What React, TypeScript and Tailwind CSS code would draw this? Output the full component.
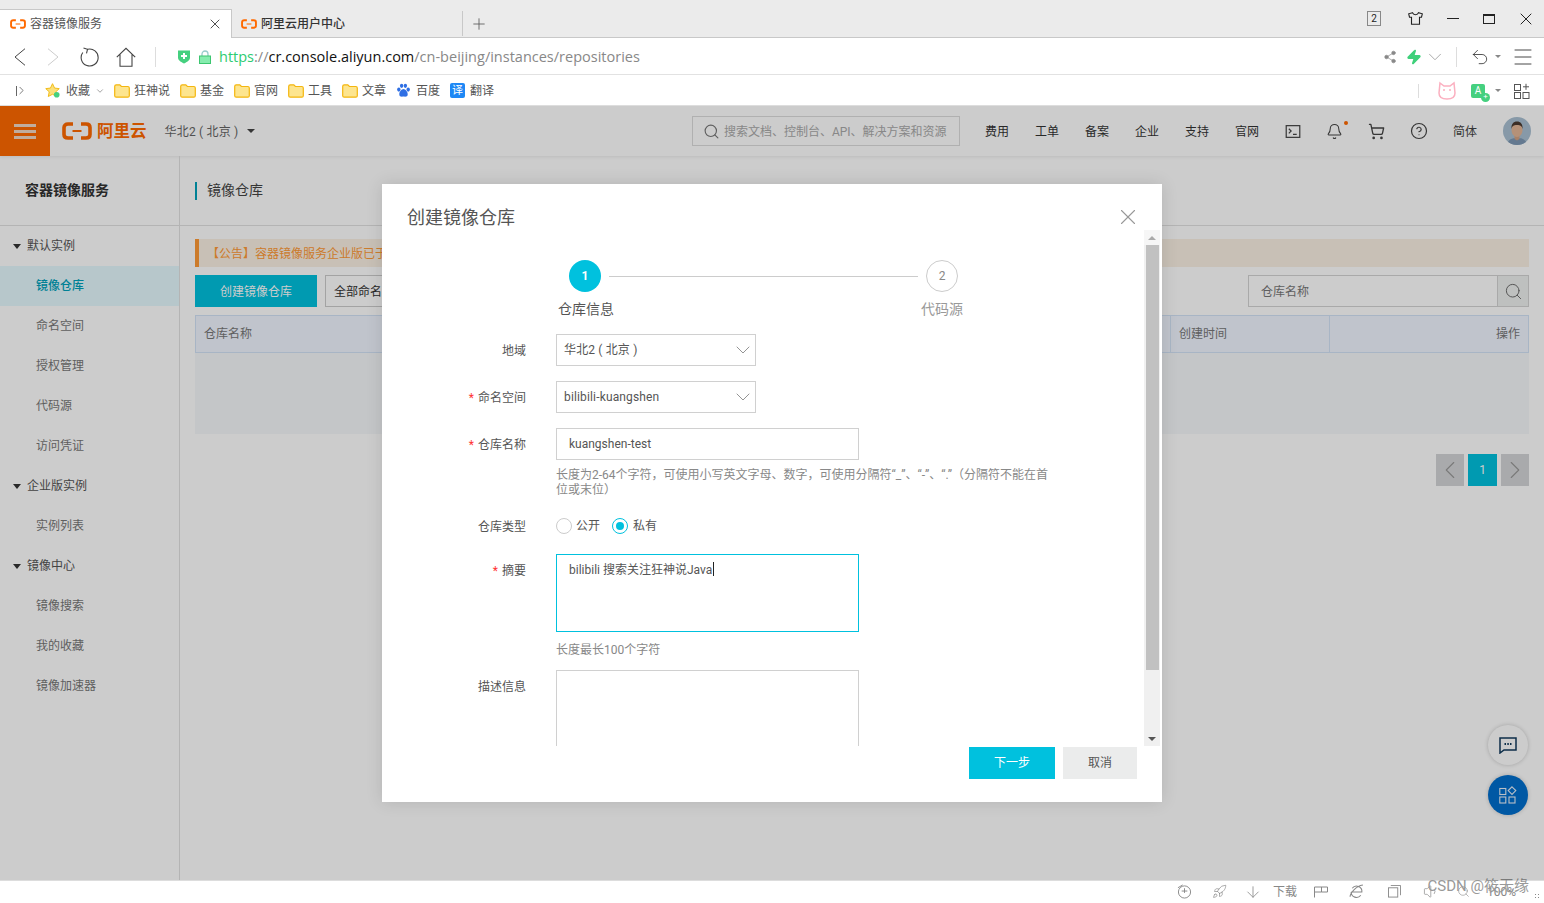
import { ReactNode } from "react";
import {
  ArrowDown, Bell, ChevronDown, ChevronLeft, ChevronRight, CircleHelp, Menu, Plus, Rocket, Search,
  Share2, ShoppingCart, Undo2, Volume1, X, Zap,
} from "lucide-react";

const cjk = "font-['Roboto','Noto_Sans_CJK_SC',sans-serif]";

const bookmarks = ["狂神说", "基金", "官网", "工具", "文章"];
const navItems = ["费用", "工单", "备案", "企业", "支持", "官网"];

const sideMenu = [
  { title: "默认实例", items: ["镜像仓库", "命名空间", "授权管理", "代码源", "访问凭证"] },
  { title: "企业版实例", items: ["实例列表"] },
  { title: "镜像中心", items: ["镜像搜索", "我的收藏", "镜像加速器"] },
];

function AliLogo({ className }: { className?: string }) {
  return (
    <svg viewBox="0 0 30 18" className={className} fill="none" stroke="currentColor">
      <path d="M11 2H6C3.500 2 2 3.500 2 5.500v7C2 14.500 3.500 16 6 16h5" strokeWidth="3.600" />
      <path d="M19 2h5c2.500 0 4 1.500 4 3.500v7c0 2-1.500 3.500-4 3.500h-5" strokeWidth="3.600" />
      <path d="M10.500 9h9" strokeWidth="2" />
    </svg>
  );
}

function Folder() {
  return (
    <svg viewBox="0 0 16 14" className="h-[14px] w-[16px]">
      <path d="M.7 2.500C.7 1.500 1.300.8 2.200.8h3.600l1.600 1.700h6.400c.9 0 1.500.6 1.500 1.500v7.700c0 .9-.6 1.500-1.500 1.500H2.200c-.9 0-1.500-.6-1.500-1.500z" fill="#fde58f" stroke="#f4b60f" strokeWidth="1.200" />
    </svg>
  );
}

function Select({ value }: { value: string }) {
  return (
    <div className="flex h-8 w-[200px] items-center justify-between border border-[#d0d0d0] pl-[7px] text-xs tracking-[0.15px] text-[#555]">
      {value}
      <ChevronDown className="h-6 w-6 text-[#888]" strokeWidth={0.9} />
    </div>
  );
}

function FormRow({ label, required, children, className }: { label: string; required?: boolean; children: ReactNode; className?: string }) {
  return (
    <div className={`flex ${className ?? ""}`}>
      <div className="h-8 w-[144px] shrink-0 text-right text-xs leading-[35px] text-[#555]">
        {required && <span className="mr-1 text-[#f33]">*</span>}
        {label}
      </div>
      <div className="ml-[30px]">{children}</div>
    </div>
  );
}

function Dialog() {
  return (
    <div className="absolute left-[382px] top-[78px] z-20 flex h-[618px] w-[780px] flex-col bg-white shadow-[0_0_16px_rgba(0,0,0,0.12)]">
      <div className="flex h-[46px] shrink-0 items-start justify-between pl-[25px] pr-[21px] pt-[22px]">
        <span className="text-[18px] leading-6 text-[#555]">创建镜像仓库</span>
        <X className="-mt-[2px] h-[26px] w-[26px] text-[#999]" strokeWidth={1} />
      </div>
      <div className="flex h-[516px] shrink-0">
        <div className="flex-1 overflow-hidden">
          <div className="ml-[187px] mt-[30px] flex items-center">
            <div className="flex h-8 w-8 items-center justify-center rounded-full bg-[#00c1de] text-xs font-bold text-white">1</div>
            <div className="mx-2 h-px w-[309px] bg-[#ccc]" />
            <div className="flex h-8 w-8 items-center justify-center rounded-full border border-[#ccc] text-xs text-[#888]">2</div>
          </div>
          <div className="ml-[176px] mt-[7px] flex text-sm leading-5">
            <span className="w-[56px] text-[#555]">仓库信息</span>
            <span className="ml-[307px] text-[#999]">代码源</span>
          </div>
          <FormRow label="地域" className="mt-[15px]"><Select value="华北2 ( 北京 )" /></FormRow>
          <FormRow label="命名空间" required className="mt-[15px]"><Select value="bilibili-kuangshen" /></FormRow>
          <FormRow label="仓库名称" required className="mt-[15px]">
            <div className="flex h-8 w-[303px] items-center border border-[#d0d0d0] pl-3 text-xs text-[#555]">kuangshen-test</div>
            <p className="mt-2 whitespace-nowrap text-xs leading-[15px] text-[#888] [text-spacing-trim:space-all]">
              长度为2-64个字符，可使用小写英文字母、数字，可使用分隔符“_”、“-”、“.”（分隔符不能在首
              <br />
              位或末位）
            </p>
          </FormRow>
          <div className="mt-[18px] flex h-5 items-center">
            <div className="w-[144px] pt-[2px] text-right text-xs text-[#555]">仓库类型</div>
            <div className="ml-[30px] flex items-center text-xs text-[#555]">
              <span className="h-4 w-4 rounded-full border border-[#ccc]" />
              <span className="ml-1">公开</span>
              <span className="ml-[12px] flex h-4 w-4 items-center justify-center rounded-full border border-[#00c1de]">
                <span className="h-2 w-2 rounded-full bg-[#00c1de]" />
              </span>
              <span className="ml-[5px]">私有</span>
            </div>
          </div>
          <FormRow label="摘要" required className="mt-[18px]">
            <div className="h-[78px] w-[303px] border border-[#00c1de] pl-3 pt-[5px] text-xs leading-[17px] text-[#555]">
              bilibili 搜索关注狂神说Java<span className="ml-px inline-block h-[14px] w-px translate-y-[2px] bg-[#222]" />
            </div>
            <p className="mt-[11px] text-xs leading-[15px] text-[#888]">长度最长100个字符</p>
          </FormRow>
          <FormRow label="描述信息" className="mt-[12px]">
            <div className="h-[100px] w-[303px] border border-[#d0d0d0]" />
          </FormRow>
        </div>
        <div className="mr-[2px] flex w-4 flex-col items-center bg-[#f0f0f0]">
          <div className="flex h-[15px] w-full items-center justify-center bg-[#f6f6f6]">
            <span className="h-0 w-0 border-x-[4px] border-b-[4px] border-x-transparent border-b-[#aaa]" />
          </div>
          <div className="h-[425px] w-[13px] bg-[#c1c1c1]" />
          <div className="mt-auto flex h-[15px] items-center justify-center">
            <span className="h-0 w-0 border-x-[4px] border-t-[4px] border-x-transparent border-t-[#555]" />
          </div>
        </div>
      </div>
      <div className="flex flex-1 items-start justify-end gap-2 pr-[25px] pt-px text-xs">
        <button className="h-8 w-[86px] bg-[#00c1de] text-white">下一步</button>
        <button className="h-8 w-[74px] bg-[#ebecec] text-[#555]">取消</button>
      </div>
    </div>
  );
}

function Avatar() {
  return (
    <svg viewBox="0 0 28 28" className="h-7 w-7 rounded-full">
      <rect width="28" height="28" fill="#a9c0d2" />
      <path d="M4 28c1-6 5-7 10-7s9 1 10 7z" fill="#7d98b4" />
      <path d="M11.500 18h5v4l-2.500 1.500-2.500-1.500z" fill="#d3a283" />
      <ellipse cx="14" cy="13" rx="5.500" ry="7" fill="#e3b697" />
      <path d="M8.500 12c-.5-5 2-7.500 5.500-7.500S20 7 19.500 12c-.5-3-2-4-5.500-4s-5 1-5.500 4z" fill="#4a3a30" />
    </svg>
  );
}

function Page() {
  return (
    <div className="relative flex min-h-0 flex-1 flex-col overflow-hidden bg-white">
      <header className="flex h-[50px] shrink-0 items-center shadow-[0_1px_3px_rgba(0,0,0,0.08)]">
        <div className="flex h-full w-[50px] items-center justify-center bg-[#ff6a00]">
          <div className="flex w-[22px] flex-col gap-[3px]">
            <span className="h-[3px] bg-[#f0d9c6]" />
            <span className="h-[3px] bg-[#f0d9c6]" />
            <span className="h-[3px] bg-[#f0d9c6]" />
          </div>
        </div>
        <AliLogo className="ml-3 h-[18px] w-[30px] text-[#ff6a00]" />
        <span className="ml-[5px] pt-[2px] text-[16.500px] font-bold text-[#ff6a00]">阿里云</span>
        <span className="ml-[18px] pt-[2px] text-xs tracking-[0.2px] text-[#666]">华北2 ( 北京 )</span>
        <span className="ml-[9px] h-0 w-0 border-x-[4px] border-t-[4px] border-x-transparent border-t-[#444]" />
        <div className="ml-auto flex h-[30px] w-[268px] items-center border border-[#ddd] pl-[10px] text-xs text-[#aaa]">
          <Search className="h-[17px] w-[17px] text-[#777]" strokeWidth={1.6} />
          <span className="ml-[4px] pt-[2px]">搜索文档、控制台、API、解决方案和资源</span>
        </div>
        <nav className="ml-[25px] flex items-center gap-[26px] pt-[2px] text-xs text-[#333]">
          {navItems.map((n) => <span key={n}>{n}</span>)}
        </nav>
        <svg viewBox="0 0 16 14" className="ml-[26px] h-[13px] w-[16px] text-[#444]" fill="none" stroke="currentColor" strokeWidth="1.300">
          <rect x=".7" y=".7" width="14.600" height="12.600" />
          <path d="M3.500 4l2.500 2.500L3.500 9M8 10h4" />
        </svg>
        <div className="relative ml-[25px]">
          <Bell className="h-[17px] w-[17px] text-[#444]" strokeWidth={1.5} />
          <span className="absolute -right-[5px] -top-[2px] h-1 w-1 rounded-full bg-[#ff6a00]" />
        </div>
        <ShoppingCart className="ml-[25px] h-[17px] w-[17px] text-[#444]" strokeWidth={1.8} />
        <CircleHelp className="ml-[25px] h-[18px] w-[18px] text-[#444]" strokeWidth={1.6} />
        <span className="ml-[25px] pt-[2px] text-xs text-[#444]">简体</span>
        <div className="ml-[26px] mr-[13px]"><Avatar /></div>
      </header>
      <div className="flex min-h-0 flex-1">
        <aside className="w-[180px] shrink-0 border-r border-[#e1e1e1]">
          <div className="flex h-[70px] items-center border-b border-[#e1e1e1] pl-[25px] text-[14px] font-bold text-[#333]">容器镜像服务</div>
          {sideMenu.map((g) => (
            <div key={g.title}>
              <div className="flex h-10 items-center pl-[13px] text-xs text-[#555]">
                <span className="h-0 w-0 border-x-[4px] border-t-[5px] border-x-transparent border-t-[#333]" />
                <span className="ml-[6px]">{g.title}</span>
              </div>
              {g.items.map((i) => (
                <div key={i} className={i === "镜像仓库" ? "flex h-10 items-center bg-[#e5f9fe] pl-9 text-xs font-medium text-[#00a2bb]" : "flex h-10 items-center pl-9 text-xs text-[#777]"}>
                  {i}
                </div>
              ))}
            </div>
          ))}
        </aside>
        <main className="min-w-0 flex-1 px-[15px]">
          <div className="-mx-[15px] flex h-[70px] items-center border-b border-[#e1e1e1] pl-[15px]">
            <span className="h-[18px] w-px border-l-2 border-[#00a2bb]" />
            <span className="ml-[10px] text-[14px] text-[#444]">镜像仓库</span>
          </div>
          <div className="mt-[13px] flex h-[28px] items-center border-l-4 border-[#ff9a36] bg-[#fbf0e4] pl-2 pt-px text-xs text-[#ff9a36]">【公告】容器镜像服务企业版已于</div>
          <div className="mt-2 flex h-8">
            <button className="w-[122px] bg-[#00c1de] pt-px text-xs text-white">创建镜像仓库</button>
            <div className="ml-2 flex w-[150px] items-center border border-[#ccc] pl-2 pt-px text-xs text-[#333]">全部命名空间</div>
            <div className="ml-auto flex w-[281px] border border-[#d4d4d4]">
              <span className="flex flex-1 items-center pl-3 pt-px text-xs text-[#777]">仓库名称</span>
              <span className="flex w-[31px] items-center justify-center border-l border-[#d4d4d4] bg-[#eef0ef]">
                <Search className="h-[19px] w-[19px] text-[#666]" strokeWidth={1.2} />
              </span>
            </div>
          </div>
          <div className="mt-2 flex h-[38px] border border-[#d2e3f7] bg-[#f0f5ff] text-xs text-[#777]">
            <div className="flex w-[974px] items-center pl-2">仓库名称</div>
            <div className="flex w-[160px] items-center border-x border-[#d2e3f7] pl-2">创建时间</div>
            <div className="flex flex-1 items-center justify-end pr-2">操作</div>
          </div>
          <div className="h-[81px] bg-[#f6f8fa]" />
          <div className="mt-5 flex justify-end">
            <span className="flex h-8 w-7 items-center justify-center bg-[#d4d5d7] text-[#999]"><ChevronLeft className="h-[30px] w-[30px] shrink-0" strokeWidth={0.9} /></span>
            <span className="ml-1 flex h-8 w-[29px] items-center justify-center bg-[#00c1de] text-xs text-white">1</span>
            <span className="ml-1 flex h-8 w-7 items-center justify-center bg-[#d4d5d7] text-[#999]"><ChevronRight className="h-[30px] w-[30px] shrink-0" strokeWidth={0.9} /></span>
          </div>
        </main>
      </div>
      <div className="absolute right-4 top-[619px] flex flex-col gap-[10px]">
        <span className="flex h-10 w-10 items-center justify-center rounded-full bg-white shadow-[0_0_4px_rgba(0,0,0,0.2)]">
          <svg viewBox="0 0 18 18" className="h-[18px] w-[18px] text-[#103a5c]" fill="none" stroke="currentColor" strokeWidth="1.500">
            <path d="M1 2h16v12H5l-4 3z" />
            <path d="M5.500 8h1.500M8.300 8h1.500M11 8h1.500" strokeWidth="2" />
          </svg>
        </span>
        <span className="flex h-10 w-10 items-center justify-center rounded-full bg-[#006ece] shadow-[0_0_4px_rgba(0,0,0,0.2)]">
          <svg viewBox="0 0 18 18" className="h-[18px] w-[18px] text-[#e8f0f8]" fill="none" stroke="currentColor" strokeWidth="1.100">
            <rect x=".8" y="2.500" width="6" height="6" />
            <rect x=".8" y="11" width="6" height="6" />
            <rect x="10" y="11" width="6" height="6" />
            <path d="M13 .8l3.800 3.800-3.800 3.800-3.800-3.800z" />
          </svg>
        </span>
      </div>
      <div className="absolute inset-0 z-10 bg-black/20" />
      <Dialog />
    </div>
  );
}

export default function App() {
  return (
    <div className={`flex h-screen flex-col overflow-hidden bg-white ${cjk}`}>
      {/* browser chrome */}
      <div className="flex h-[38px] shrink-0 items-end border-b border-[#c8c8c8] bg-[#ebebeb]">
        <div className="-mb-px flex h-[29px] w-[232px] items-center border-r border-t border-[#c8c8c8] bg-white pl-[10px] pr-2 text-xs text-[#555]">
          <AliLogo className="h-[10px] w-[16px] text-[#ff6a00]" />
          <span className="ml-1">容器镜像服务</span>
          <X className="ml-auto h-[16px] w-[16px] text-[#333]" strokeWidth={1.3} />
        </div>
        <div className="mb-[1px] flex h-[25px] w-[231px] items-center border-r border-[#c8c8c8] pl-[9px] text-xs font-medium text-[#333]">
          <AliLogo className="h-[10px] w-[16px] text-[#ff6a00]" />
          <span className="ml-1">阿里云用户中心</span>
        </div>
        <Plus className="mb-[4px] ml-[7px] h-[18px] w-[18px] text-[#555]" strokeWidth={1.1} />
        <div className="ml-auto flex items-center self-center pr-[8px] text-[#222]">
          <span className="flex h-[15px] w-[14px] items-center justify-center border border-[#888] text-[10px] leading-none">2</span>
          <svg viewBox="0 0 15 13" className="ml-[27px] h-[13px] w-[15px]" fill="none" stroke="currentColor" strokeWidth="1.100">
            <path d="M4.500.7L.7 1.800l.8 3.400h2V12.300h8V5.200h2l.8-3.400L10.500.7c-.5 1.500-1.500 2-3 2s-2.500-.5-3-2z" />
          </svg>
          <span className="ml-[24px] h-px w-3 bg-[#222]" />
          <span className="ml-[24px] h-[10px] w-3 border border-t-2 border-[#222]" />
          <X className="ml-[21px] h-[20px] w-[20px]" strokeWidth={1.2} />
        </div>
      </div>
      <div className="flex h-[37px] shrink-0 items-center border-b border-[#e2e2e2] pl-[14px] pt-px text-[#444]">
        <svg viewBox="0 0 12 18" className="h-[18px] w-[12px]" fill="none" stroke="currentColor" strokeWidth="1">
          <path d="M11 .7L1 9l10 8.300" />
        </svg>
        <svg viewBox="0 0 12 18" className="ml-[21px] h-[18px] w-[12px] text-[#ccc]" fill="none" stroke="currentColor" strokeWidth="1">
          <path d="M1 .7L11 9 1 17.300" />
        </svg>
        <svg viewBox="0 0 20 20" className="ml-[21px] h-[20px] w-[20px]" fill="none" stroke="currentColor" strokeWidth="1.100">
          <path d="M7.500 2.300A8.500 8.500 0 1 1 2.800 5.500" />
          <path d="M3.500 1l4 1.300-1 4" />
        </svg>
        <svg viewBox="0 0 20 20" className="ml-[16px] h-[20px] w-[20px]" fill="none" stroke="currentColor" strokeWidth="1.100">
          <path d="M.8 10.200L10 1.300l9.200 8.900M4 7.500v11.700h12V7.500" />
        </svg>
        <span className="ml-[19px] h-[20px] w-px bg-[#ddd]" />
        <svg viewBox="0 0 14 15" className="ml-[21px] h-[15px] w-[14px]">
          <path d="M1 1.500h12v7c0 3-3 4.500-6 6-3-1.500-6-3-6-6z" fill="#45d07f" />
          <path d="M7 4v6M4 7h6" stroke="#fff" strokeWidth="2" />
        </svg>
        <svg viewBox="0 0 12 14" className="ml-[8px] h-[14px] w-[12px]">
          <path d="M3 6V4a3 3 0 0 1 6 0v2" fill="none" stroke="#9cc" strokeWidth="1.300" />
          <rect x=".5" y="6" width="11" height="7.500" fill="#86ecae" stroke="#3cc670" />
        </svg>
        <span className="ml-[8px] font-['Open_Sans',sans-serif] text-[14.500px] text-[#888]">
          <span className="text-[#2ecc71]">https</span>://<span className="text-[#111]">cr.console.aliyun.com</span>/cn-beijing/instances/repositories
        </span>
        <div className="ml-auto flex items-center pr-[9px]">
          <Share2 className="h-[14px] w-[14px] fill-[#888] text-[#888]" strokeWidth={1.2} />
          <Zap className="ml-[9px] h-[16px] w-[16px] fill-[#3fd07a] text-[#3fd07a]" />
          <ChevronDown className="ml-[2px] h-[22px] w-[22px] text-[#999]" strokeWidth={0.9} />
          <span className="ml-[10px] h-[20px] w-px bg-[#ddd]" />
          <Undo2 className="ml-[13px] h-[20px] w-[20px] text-[#333]" strokeWidth={1} />
          <span className="ml-[5px] h-0 w-0 border-x-[3px] border-t-[3px] border-x-transparent border-t-[#888]" />
          <Menu className="ml-[10px] h-[24px] w-[24px] text-[#333]" strokeWidth={0.9} />
        </div>
      </div>
      <div className="flex h-[31px] shrink-0 items-center border-b border-[#ddd] pl-[16px] pt-px text-xs text-[#555]">
        <span className="flex items-center text-[#555]">
          <span className="h-[10px] w-px bg-[#666]" />
          <ChevronRight className="-ml-[2px] h-[13px] w-[13px]" strokeWidth={1.4} />
        </span>
        <svg viewBox="0 0 16 16" className="ml-[17px] h-[15px] w-[15px]">
          <path d="M8 .7l2.200 4.700 5 .6-3.700 3.400 1 5L8 12l-4.500 2.400 1-5L.8 6l5-.6z" fill="#fbe07a" stroke="#f0b90f" />
          <circle cx="12.500" cy="12.500" r="3" fill="#45d07f" />
        </svg>
        <span className="ml-[6px]">收藏</span>
        <ChevronDown className="ml-[5px] h-[10px] w-[10px]" strokeWidth={1.3} />
        <span className="w-[9px]" />
        {bookmarks.map((b) => (
          <span key={b} className="mr-[10px] flex items-center gap-1">
            <Folder />
            {b}
          </span>
        ))}
        <svg viewBox="0 0 16 16" className="h-[15px] w-[15px] text-[#2f6fe4]" fill="currentColor">
          <ellipse cx="3" cy="7" rx="1.800" ry="2.200" />
          <ellipse cx="6" cy="3" rx="1.800" ry="2.200" />
          <ellipse cx="10" cy="3" rx="1.800" ry="2.200" />
          <ellipse cx="13" cy="7" rx="1.800" ry="2.200" />
          <path d="M8 6.500c2 0 4.500 3 4.500 5.500 0 2.500-2 3-4.500 2.500-2.500.5-4.500 0-4.500-2.500 0-2.500 2.500-5.500 4.500-5.500z" />
        </svg>
        <span className="ml-[5px]">百度</span>
        <span className="ml-[10px] flex h-[15px] w-[15px] items-center justify-center rounded-[2px] bg-[#1e88f5] text-[11px] leading-none text-white">译</span>
        <span className="ml-[5px]">翻译</span>
        <div className="ml-auto flex items-center pr-[14px]">
          <span className="h-[14px] w-px bg-[#ddd]" />
          <svg viewBox="0 0 20 20" className="ml-[18px] h-[20px] w-[20px]" fill="none" stroke="#fbb0c0" strokeWidth="1.500">
            <path d="M3 2l4 3h6l4-3 1 10c0 4-3 6-8 6s-8-2-8-6z" />
            <path d="M6 9h2M12 9h2" />
          </svg>
          <span className="relative ml-[14px] flex h-[14px] w-[14px] items-center justify-center rounded-[2px] bg-[#45d07f] text-[10px] leading-none text-white">
            A
            <span className="absolute -bottom-[4px] -right-[5px] flex h-[9px] w-[9px] items-center justify-center rounded-full bg-[#45d07f] text-[8px]">+</span>
          </span>
          <span className="ml-[10px] h-0 w-0 border-x-[3px] border-t-[3px] border-x-transparent border-t-[#888]" />
          <svg viewBox="0 0 16 16" className="ml-[13px] h-[16px] w-[16px] text-[#555]" fill="none" stroke="currentColor" strokeWidth="1">
            <rect x=".5" y="1.500" width="6" height="6" />
            <rect x=".5" y="9.500" width="6" height="6" />
            <rect x="9" y="9.500" width="6" height="6" />
            <path d="M12 .8v6M9 3.800h6" />
          </svg>
        </div>
      </div>
      <Page />
      {/* status bar */}
      <div className="relative flex h-[23px] shrink-0 items-center justify-end border-t border-[#ddd] pb-px pr-[28px] text-xs text-[#888]">
        <svg viewBox="0 0 16 16" className="h-[15px] w-[15px]" fill="none" stroke="currentColor" strokeWidth="1">
          <circle cx="8" cy="8.500" r="6.500" />
          <path d="M8 4.500v5M5 7.500h6M1 4l5-3" />
        </svg>
        <Rocket className="ml-[20px] h-[15px] w-[15px]" strokeWidth={1.1} />
        <ArrowDown className="ml-[17px] h-[18px] w-[18px]" strokeWidth={1.1} />
        <span className="ml-[11px]">下载</span>
        <svg viewBox="0 0 14 12" className="ml-[17px] h-[12px] w-[14px]" fill="none" stroke="currentColor" strokeWidth="1">
          <path d="M.5 11.500V1h13v5h-6V1M.5 6h7" />
        </svg>
        <svg viewBox="0 0 14 14" className="ml-[21px] h-[15px] w-[15px]" fill="none" stroke="currentColor" strokeWidth="1">
          <path d="M2 7.500h10A5 5 0 0 0 3 4M2 7.500a5 5 0 0 0 9 3M1 12C1 9 6 2 13 1" />
        </svg>
        <svg viewBox="0 0 14 14" className="ml-[24px] h-[13px] w-[13px]" fill="none" stroke="currentColor" strokeWidth="1">
          <rect x=".5" y="3" width="10" height="10" />
          <path d="M3 .5h10.500V11" />
        </svg>
        <Volume1 className="ml-[22px] h-[17px] w-[17px]" strokeWidth={1} />
        <Search className="ml-[17px] h-[13px] w-[13px]" strokeWidth={1.1} />
        <span className="ml-[17px]">100%</span>
        <span className="absolute right-[15px] -top-[4px] text-[15px] text-[#999]">CSDN @筱无缘</span>
        <span className="absolute bottom-[3px] right-[3px] h-[7px] w-[7px] bg-[radial-gradient(#888_1px,transparent_1px)] bg-[length:3px_3px]" />
      </div>
    </div>
  );
}
